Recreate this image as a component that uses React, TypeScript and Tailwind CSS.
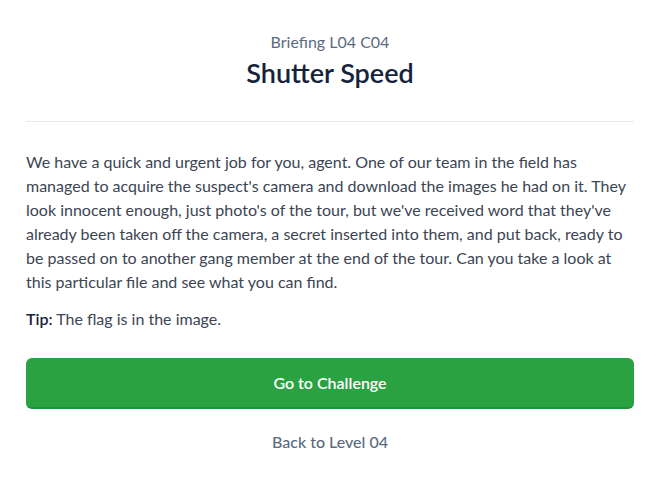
const App = () => {
  return (
    <div className="min-h-screen bg-white font-['Lato','Liberation_Sans',sans-serif]">
      <div className="px-[26px] pt-[31px]">
        <header className="text-center">
          <p className="text-[16px] leading-[22px] text-[#5b6b80]">Briefing L04 C04</p>
          <h1 className="mt-[2px] text-[27px] font-semibold leading-[36px] text-[#14233a]">
            Shutter Speed
          </h1>
        </header>

        <hr className="mt-[30px] border-t border-[#e8ebef]" />

        <section className="mt-[28px] text-[16px] leading-[24px] text-[#3c4553]">
          <p>
            We have a quick and urgent job for you, agent. One of our team in the field has
            managed to acquire the suspect's camera and download the images he had on it. They
            look innocent enough, just photo's of the tour, but we've received word that they've
            already been taken off the camera, a secret inserted into them, and put back, ready to
            be passed on to another gang member at the end of the tour. Can you take a look at
            this particular file and see what you can find.
          </p>
          <p className="mt-[13px]">
            <span className="font-semibold text-[#14233a]">Tip:</span> The flag is in the image.
          </p>
        </section>

        <button className="mt-[27px] flex h-[51px] w-full items-center justify-center rounded-md border-b-2 border-[#23913a] bg-[#2aa242] text-[16px] font-semibold text-white">
          Go to Challenge
        </button>

        <p className="mt-[21px] text-center text-[16px] font-medium text-[#5b6b80]">
          Back to Level 04
        </p>
      </div>
    </div>
  );
};

export default App;
